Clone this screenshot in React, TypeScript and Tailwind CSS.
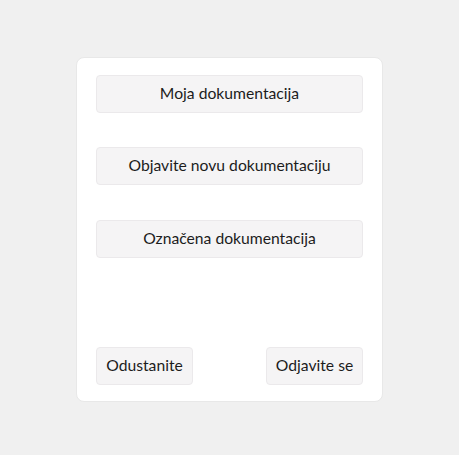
export default function App() {
  const btn =
    "h-[38px] rounded-[4px] border border-[#ebe9eb] bg-[#f5f4f5] text-[15.7px] text-[#1c1c1c] flex items-center justify-center";
  return (
    <div
      className="w-[459px] h-[455px] bg-[#f0f0f0] flex justify-center pt-[57px]"
      style={{ fontFamily: "Lato, sans-serif" }}
    >
      <div className="w-[307px] h-[345px] bg-white rounded-[8px] border border-[#e8e8e8] pt-[17px] px-[19px] pb-[16px] flex flex-col">
        <div className={btn}>Moja dokumentacija</div>
        <div className={btn + " mt-[34px]"}>Objavite novu dokumentaciju</div>
        <div className={btn + " mt-[35px]"}>Označena dokumentacija</div>
        <div className="mt-auto flex justify-between">
          <div className={btn + " w-[97px]"}>Odustanite</div>
          <div className={btn + " w-[97px]"}>Odjavite se</div>
        </div>
      </div>
    </div>
  );
}
